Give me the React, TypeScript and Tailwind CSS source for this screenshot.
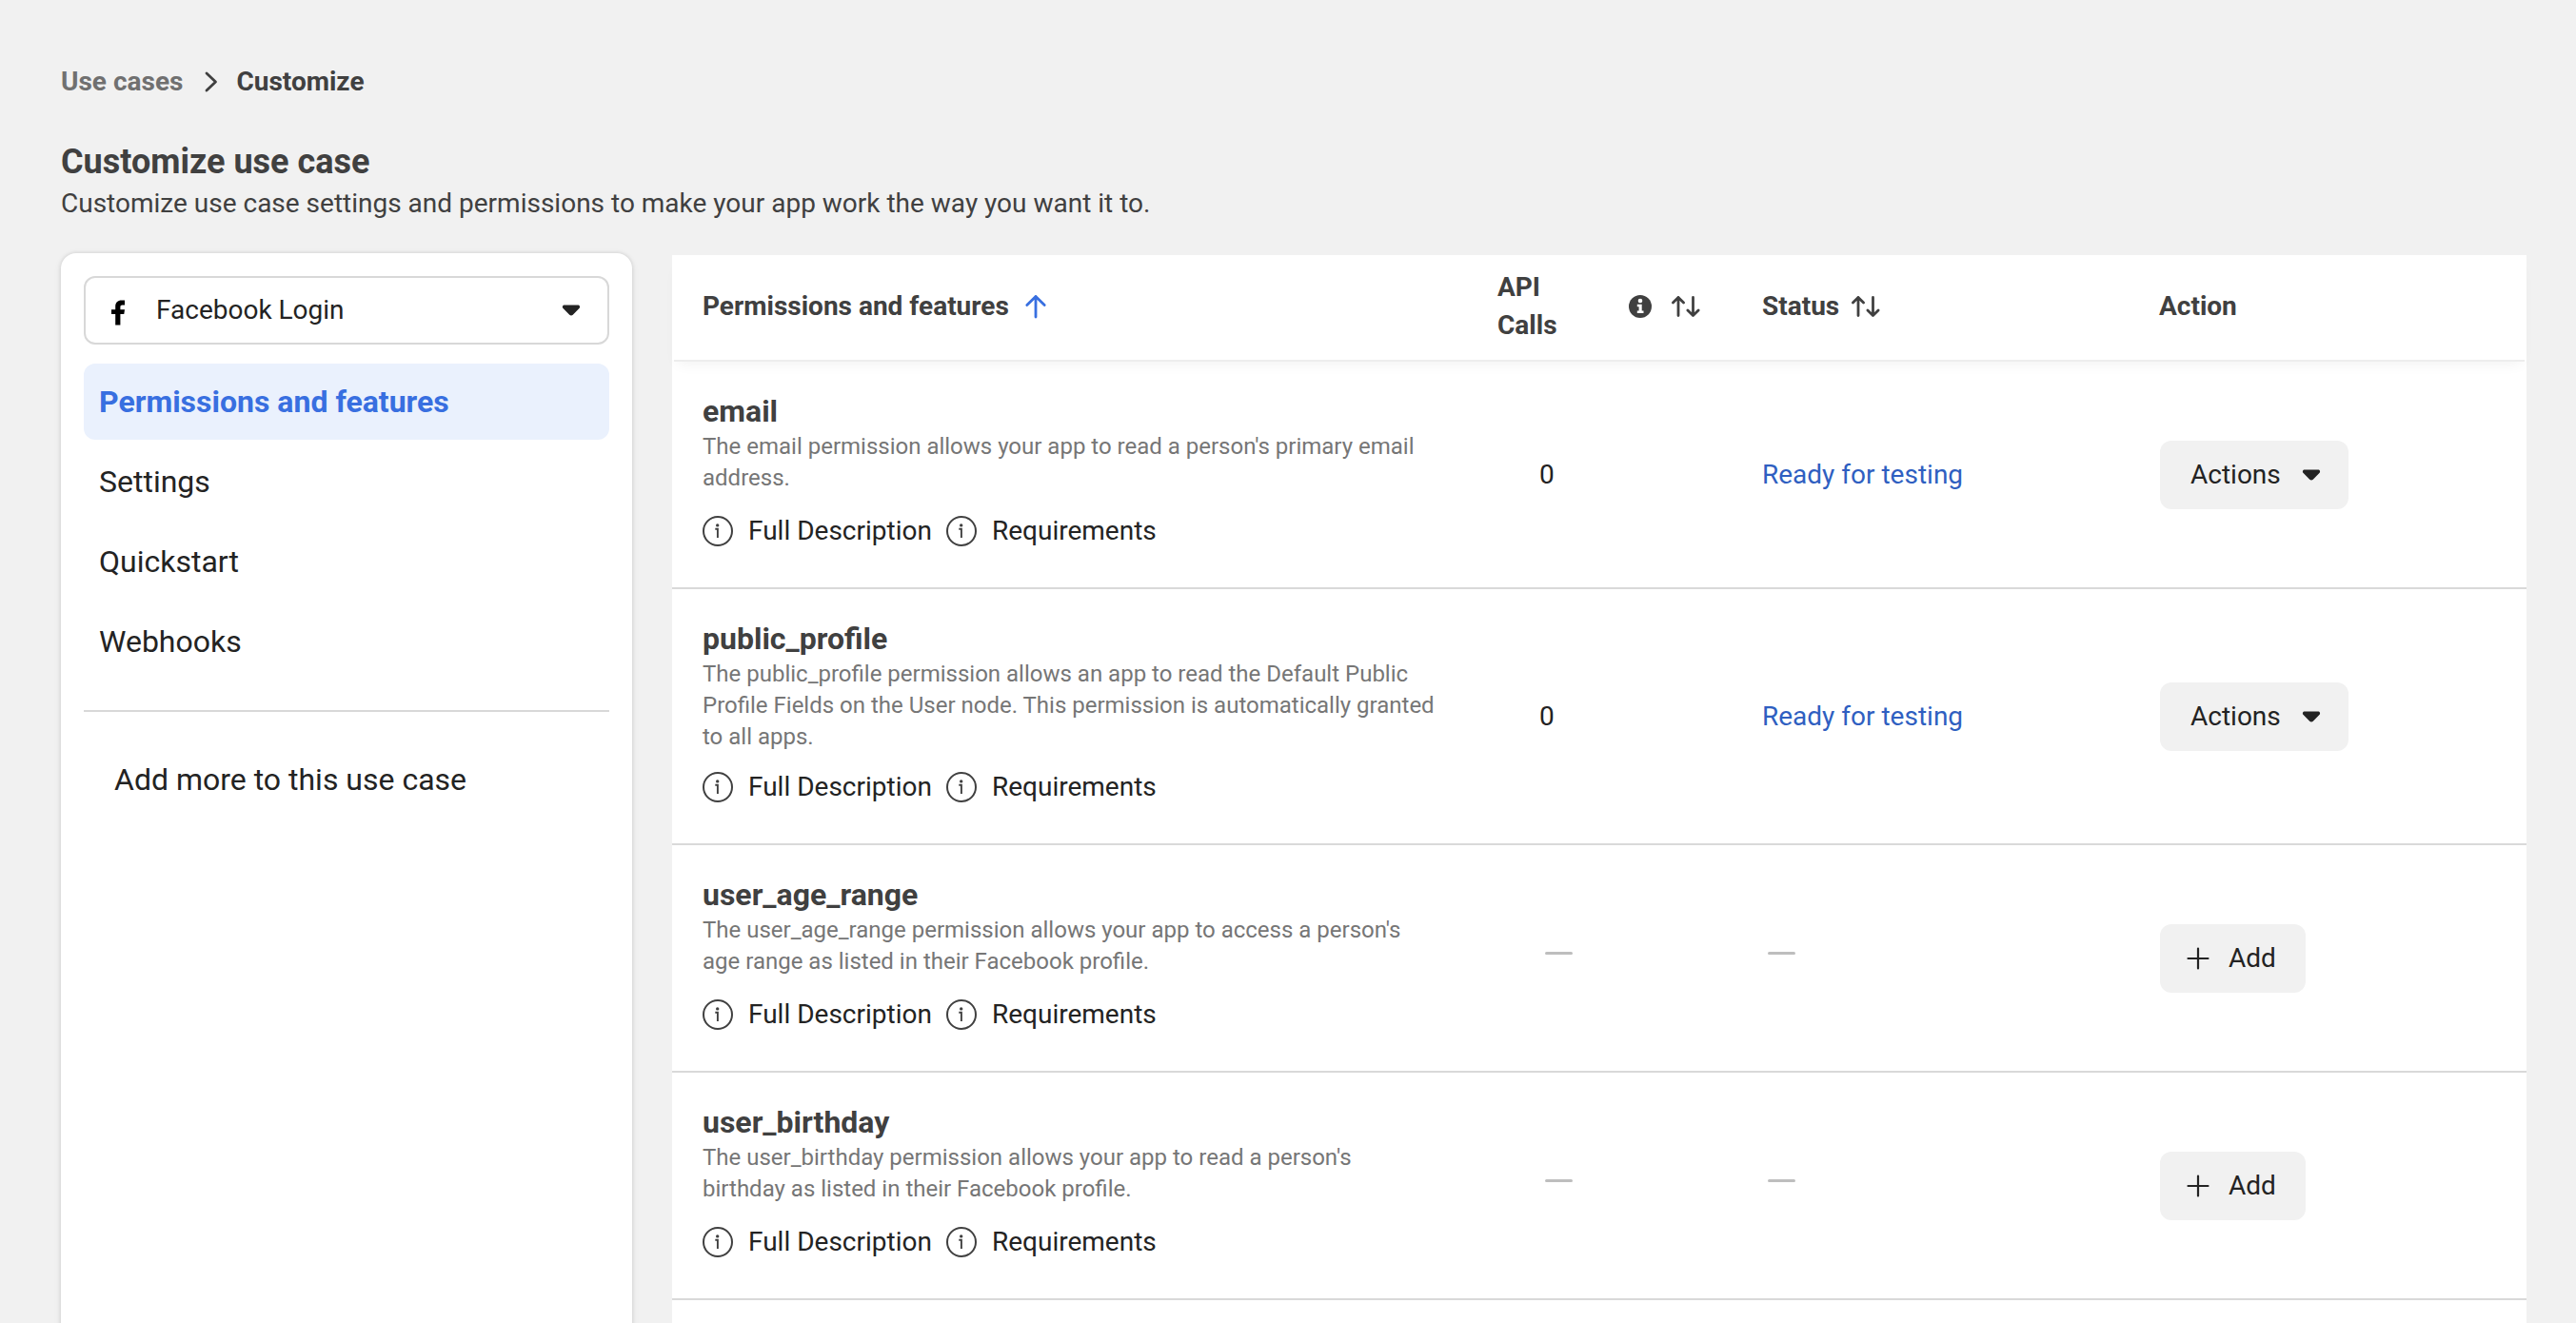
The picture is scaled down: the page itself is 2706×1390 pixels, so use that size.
import type { ReactNode } from "react";

type Permission = {
  name: string;
  description: string;
  active: boolean;
  calls?: number;
};

const NAV_ITEMS = ["Permissions and features", "Settings", "Quickstart", "Webhooks"];

const PERMISSIONS: Permission[] = [
  {
    name: "email",
    description: "The email permission allows your app to read a person's primary email address.",
    active: true,
    calls: 0,
  },
  {
    name: "public_profile",
    description:
      "The public_profile permission allows an app to read the Default Public Profile Fields on the User node. This permission is automatically granted to all apps.",
    active: true,
    calls: 0,
  },
  {
    name: "user_age_range",
    description:
      "The user_age_range permission allows your app to access a person's age range as listed in their Facebook profile.",
    active: false,
  },
  {
    name: "user_birthday",
    description:
      "The user_birthday permission allows your app to read a person's birthday as listed in their Facebook profile.",
    active: false,
  },
];

function Caret() {
  return (
    <svg width="20" height="12" viewBox="0 0 20 12" fill="#232323" className="shrink-0">
      <path d="M3 0.5h14c2 0 2.8 2.2 1.4 3.6l-6.6 6.6c-1 1-2.6 1-3.6 0L1.6 4.1C0.2 2.7 1 0.5 3 0.5z" />
    </svg>
  );
}

function SortIcon() {
  return (
    <svg
      width="32"
      height="24"
      viewBox="0 0 32 24"
      fill="none"
      stroke="#404040"
      strokeWidth="2.8"
      strokeLinecap="round"
      strokeLinejoin="round"
      className="shrink-0"
    >
      <path d="M8 21.6V2.4M2.4 8l5.6-5.6 5.6 5.6" />
      <path d="M23.5 2.4v19.2M17.9 16l5.6 5.6 5.6-5.6" />
    </svg>
  );
}

function InfoLink({ children }: { children: ReactNode }) {
  return (
    <a className="flex items-center gap-4">
      <svg width="32" height="32" viewBox="0 0 32 32" fill="none" stroke="#404040" className="shrink-0">
        <circle cx="16" cy="16" r="15" strokeWidth="2" />
        <path d="M13.3 13.8h2.6v9.2" strokeWidth="1.9" />
        <circle cx="15.7" cy="9.9" r="1.7" fill="#404040" stroke="none" />
      </svg>
      <span>{children}</span>
    </a>
  );
}

function Dash() {
  return <div className="mb-[11px] h-[3px] w-[29px] rounded-full bg-[#bebebe]" />;
}

function Sidebar() {
  return (
    <aside className="-mt-0.5 -mb-10 w-[600px] shrink-0 rounded-2xl bg-white p-6 shadow-[0_0_4px_rgba(0,0,0,0.14),0_2px_10px_rgba(0,0,0,0.06)]">
      <button className="flex h-[72px] w-full items-center rounded-xl border-2 border-[#d8d8d8] pr-[28px] pl-[27px] text-[28px] leading-10">
        <svg width="15" height="27" viewBox="0 0 15 27" fill="#000" className="mt-1 shrink-0">
          <path d="M4.2 26.5V15H0v-4.8h4.2V7C4.2 2.8 6.8 0.5 10.6 0.5H14v5h-2.4C10 5.5 9.4 6.2 9.4 7.6v2.6H14L13.3 15H9.4v11.5z" />
        </svg>
        <span className="ml-[32px] flex-1 text-left">Facebook Login</span>
        <Caret />
      </button>
      <nav className="mt-5 flex flex-col gap-1">
        {NAV_ITEMS.map((item, i) => (
          <a
            key={item}
            className={
              i === 0
                ? "flex h-20 items-center rounded-xl bg-[#eaf1fd] px-4 text-[32px] font-bold text-[#386fe0]"
                : "flex h-20 items-center rounded-xl px-4 text-[32px]"
            }
          >
            {item}
          </a>
        ))}
      </nav>
      <hr className="mt-8 border-t-2 border-[#d8d8d8]" />
      <div className="mt-[51px] px-8 text-[32px] leading-10">Add more to this use case</div>
    </aside>
  );
}

function PermissionRow({ permission }: { permission: Permission }) {
  return (
    <div className="grid min-h-[239px] grid-cols-[834px_280px_417px_417px] border-b-2 border-[#d9d9d9] text-[28px]">
      <div className="flex flex-col justify-between px-8 pt-[31px] pb-[43px]">
        <div>
          <h3 className="text-[32px] leading-[42px] font-bold text-[#404040]">{permission.name}</h3>
          <p className="text-[24px] leading-[33px] text-[#767676]">{permission.description}</p>
        </div>
        <div className="mt-5 flex h-8 items-center gap-[15px]">
          <InfoLink>Full Description</InfoLink>
          <InfoLink>Requirements</InfoLink>
        </div>
      </div>
      {permission.active ? (
        <>
          <div className="flex items-center pl-[77px]">{permission.calls}</div>
          <div className="flex items-center pl-[31px] text-[#2f5fc1]">Ready for testing</div>
          <div className="flex items-center px-8">
            <button className="flex h-[72px] items-center gap-[22px] rounded-xl bg-[#f1f1f1] pr-[29px] pl-8">
              Actions
              <Caret />
            </button>
          </div>
        </>
      ) : (
        <>
          <div className="flex items-center pl-[83px]">
            <Dash />
          </div>
          <div className="flex items-center pl-[37px]">
            <Dash />
          </div>
          <div className="flex items-center px-8">
            <button className="flex h-[72px] items-center gap-5 rounded-xl bg-[#f1f1f1] pr-[31px] pl-7">
              <svg width="24" height="24" viewBox="0 0 24 24" stroke="#232323" strokeWidth="2.2" strokeLinecap="round">
                <path d="M12 1.5v21M1.5 12h21" />
              </svg>
              Add
            </button>
          </div>
        </>
      )}
    </div>
  );
}

function PermissionsTable() {
  return (
    <section className="w-[1948px] bg-white">
      <header className="relative z-10 mb-0.5 grid h-[110px] grid-cols-[834px_280px_417px_417px] items-center bg-white pb-0.5 text-[28px] leading-10 font-bold text-[#404040] shadow-[0_4px_0_-2px_#ededed,0_10px_14px_-6px_rgba(0,0,0,0.06)]">
        <div className="flex items-center gap-4 px-8">
          Permissions and features
          <svg
            width="24"
            height="26"
            viewBox="0 0 24 26"
            fill="none"
            stroke="#386fe0"
            strokeWidth="2.8"
            strokeLinecap="round"
            strokeLinejoin="round"
          >
            <path d="M12 24V2.5M2.8 11.5l9.2-9 9.2 9" />
          </svg>
        </div>
        <div className="flex items-center pl-[33px]">
          <span className="w-[80px]">API Calls</span>
          <svg width="24" height="24" viewBox="0 0 24 24" className="ml-[58px] shrink-0">
            <circle cx="12" cy="12" r="12" fill="#404040" />
            <circle cx="12" cy="6" r="2.3" fill="#fff" />
            <path d="M8.8 9.8h4.9v6.7h1.8v2.5H8.8v-2.5h1.8v-4.2H8.800z" fill="#fff" />
          </svg>
          <span className="ml-5">
            <SortIcon />
          </span>
        </div>
        <div className="flex items-center gap-3 pl-[31px]">
          Status
          <SortIcon />
        </div>
        <div className="pl-[31px]">Action</div>
      </header>
      {PERMISSIONS.map((p) => (
        <PermissionRow key={p.name} permission={p} />
      ))}
    </section>
  );
}

export default function App() {
  return (
    <div className="flex h-[1390px] w-[2706px] flex-col overflow-hidden bg-[#f1f1f1] px-16 pt-[66px] font-['Roboto',sans-serif] text-[#232323]">
      <div className="flex h-10 items-center text-[28px] leading-10 font-bold">
        <span className="text-[#707070]">Use cases</span>
        <svg
          width="16"
          height="24"
          viewBox="0 0 16 24"
          fill="none"
          stroke="#404040"
          strokeWidth="2.8"
          strokeLinecap="round"
          strokeLinejoin="round"
          className="mr-[18px] ml-[22px]"
        >
          <path d="M3 3l9.5 9L3 21" />
        </svg>
        <span className="text-[#404040]">Customize</span>
      </div>
      <h1 className="mt-[42px] text-[36px] leading-[44px] font-bold text-[#404040]">Customize use case</h1>
      <p className="mt-0.5 text-[28px] leading-10 text-[#404040]">
        Customize use case settings and permissions to make your app work the way you want it to.
      </p>
      <main className="mt-[34px] flex flex-1 gap-[42px]">
        <Sidebar />
        <PermissionsTable />
      </main>
    </div>
  );
}
